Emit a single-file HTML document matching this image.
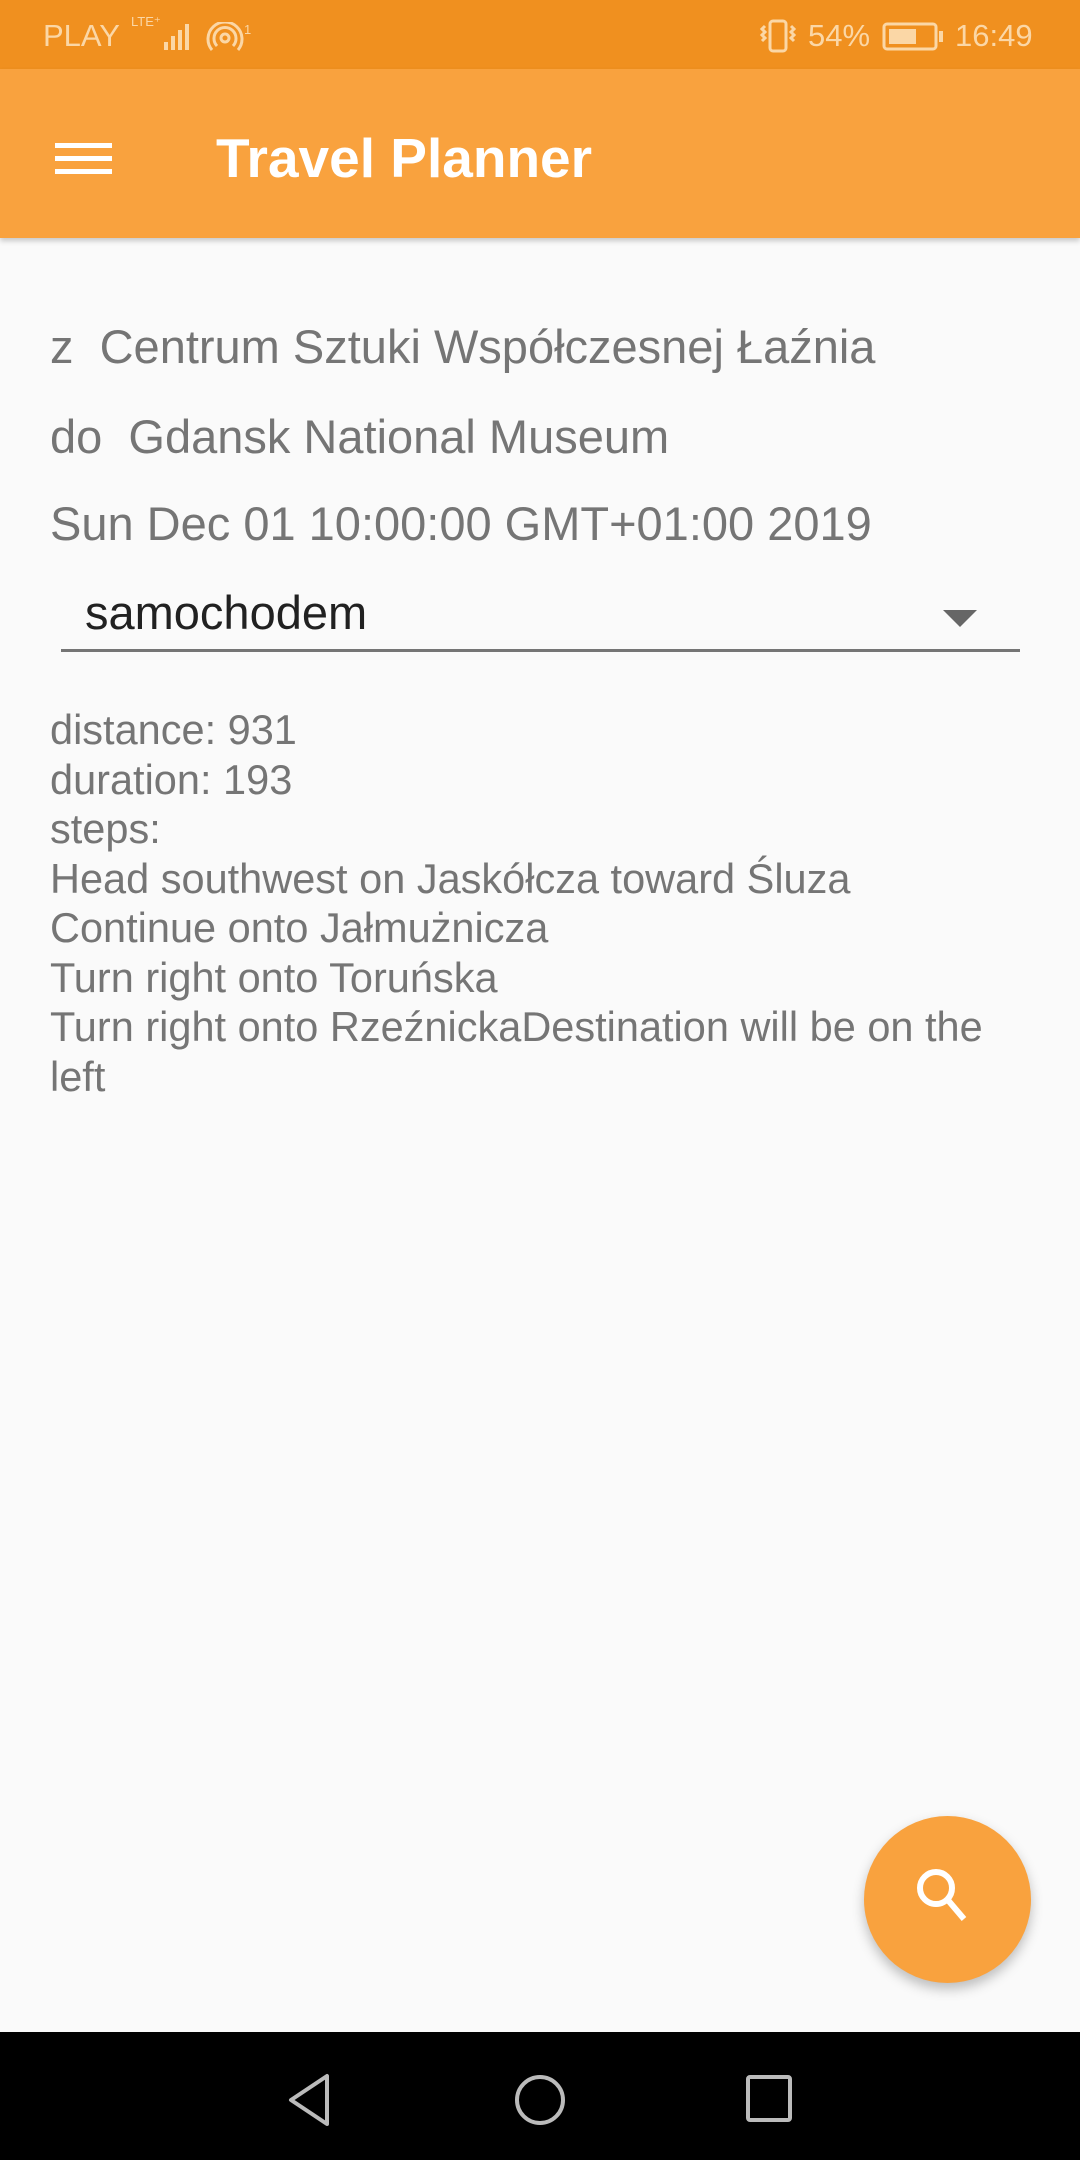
<!DOCTYPE html>
<html><head><meta charset="utf-8"><style>
*{margin:0;padding:0;box-sizing:border-box}
body{width:1080px;height:2160px;background:#fafafa;font-family:"Liberation Sans",sans-serif;position:relative;overflow:hidden}
.sb{position:absolute;left:0;top:0;width:1080px;height:69px;background:#f0901f;color:#fbd7a6;font-size:31px}
.tb{position:absolute;left:0;top:69px;width:1080px;height:169px;background:#f9a23e;box-shadow:0 3px 5px rgba(0,0,0,.2)}
.t{position:absolute;color:#757575;font-size:47px;left:50px;white-space:nowrap}
.s{position:absolute;left:50px;top:705px;color:#757575;font-size:41.5px;line-height:49.5px;width:960px}
.nav{position:absolute;left:0;top:2032px;width:1080px;height:128px;background:#000}
</style></head><body>
<div class="sb">
<span style="position:absolute;left:43px;top:18px">PLAY</span>
<span style="position:absolute;left:131px;top:14px;font-size:13px">LTE⁺</span>
<svg style="position:absolute;left:140px;top:22px" width="120" height="32"><g fill="#fbd7a6"><rect x="24" y="20" width="4" height="8"/><rect x="31" y="14" width="4" height="14"/><rect x="38" y="8" width="4" height="20"/><rect x="45" y="2" width="4" height="26"/></g><g fill="none" stroke="#fbd7a6" stroke-width="3"><circle cx="85" cy="16" r="4"/><path d="M77 24a11 11 0 1 1 16 0M72 28a17 17 0 1 1 26 0"/></g><text x="104" y="12" font-size="13" fill="#fbd7a6">1</text></svg>
<svg style="position:absolute;left:758px;top:18px" width="45" height="36"><g fill="none" stroke="#fbd7a6" stroke-width="3"><rect x="12" y="3" width="16" height="30" rx="3"/><path d="M7 8l-3 3 3 3-3 3 3 3-3 3M33 8l3 3-3 3 3 3-3 3 3 3"/></g></svg>
<span style="position:absolute;left:808px;top:18px">54%</span>
<svg style="position:absolute;left:882px;top:22px" width="62" height="30"><rect x="2" y="2" width="52" height="25" rx="3" fill="none" stroke="#fbd7a6" stroke-width="3"/><rect x="7" y="7" width="27" height="15" fill="#fbd7a6"/><rect x="57" y="9" width="4" height="11" fill="#fbd7a6"/></svg>
<span style="position:absolute;left:955px;top:18px">16:49</span>
</div>
<div class="tb">
<div style="position:absolute;left:55px;top:74px;width:57px;height:5px;background:#fff"></div>
<div style="position:absolute;left:55px;top:87px;width:57px;height:5px;background:#fff"></div>
<div style="position:absolute;left:55px;top:100px;width:57px;height:5px;background:#fff"></div>
<div style="position:absolute;left:216px;top:57px;color:#fff;font-size:55px;font-weight:bold;white-space:nowrap">Travel Planner</div>
</div>
<div class="t" style="top:319px">z&nbsp; Centrum Sztuki Współczesnej Łaźnia</div>
<div class="t" style="top:409px">do&nbsp; Gdansk National Museum</div>
<div class="t" style="top:496px">Sun Dec 01 10:00:00 GMT+01:00 2019</div>
<div class="t" style="top:585px;left:85px;color:#212121">samochodem</div>
<svg style="position:absolute;left:943px;top:610px" width="34" height="17"><path d="M0 0h34L17 17z" fill="#666"/></svg>
<div style="position:absolute;left:61px;top:649px;width:959px;height:3px;background:#757575"></div>
<div class="s">distance: 931<br>duration: 193<br>steps:<br>Head southwest on Jaskółcza toward Śluza<br>Continue onto Jałmużnicza<br>Turn right onto Toruńska<br>Turn right onto RzeźnickaDestination will be on the left</div>
<div style="position:absolute;left:864px;top:1816px;width:167px;height:167px;border-radius:50%;background:#f9a23e;box-shadow:0 6px 12px rgba(0,0,0,.25)"></div>
<svg style="position:absolute;left:910px;top:1862px" width="70" height="70"><circle cx="26" cy="26" r="16" fill="none" stroke="#fff" stroke-width="6"/><path d="M37 37l17 20" stroke="#fff" stroke-width="6"/></svg>
<div class="nav">
<svg style="position:absolute;left:285px;top:40px" width="50" height="56"><path d="M42 4v48L6 28z" fill="none" stroke="#bbb" stroke-width="4" stroke-linejoin="round"/></svg>
<svg style="position:absolute;left:512px;top:40px" width="56" height="56"><circle cx="28" cy="28" r="23" fill="none" stroke="#bbb" stroke-width="4"/></svg>
<svg style="position:absolute;left:745px;top:42px" width="50" height="52"><rect x="3" y="3" width="42" height="43" rx="2" fill="none" stroke="#bbb" stroke-width="4"/></svg>
</div>
</body></html>
